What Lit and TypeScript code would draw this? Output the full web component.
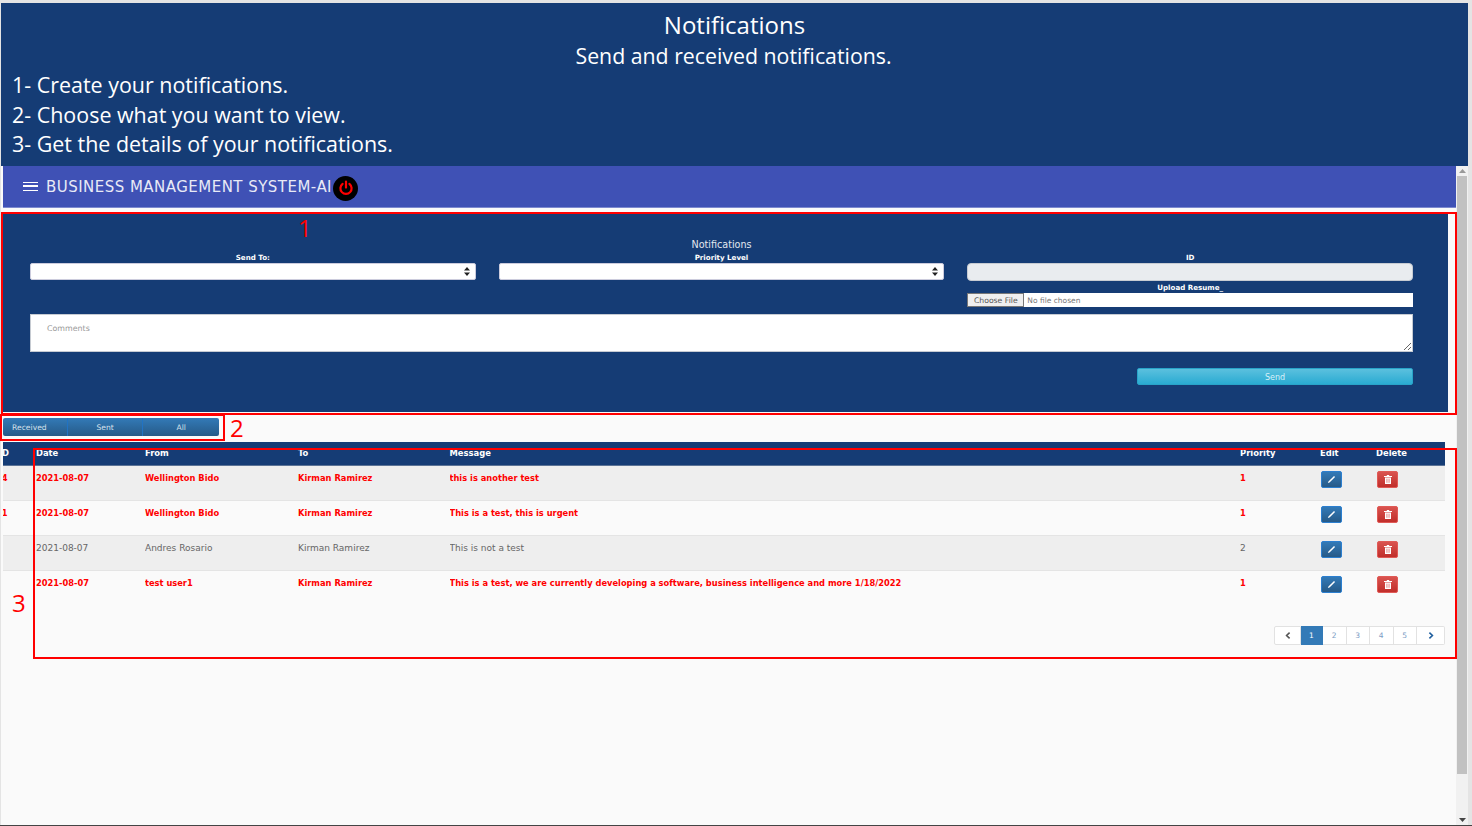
import { LitElement, css, html, svg } from "lit";
import { customElement } from "lit/decorators.js";
import { classMap } from "lit/directives/class-map.js";

const rows = [
  { id: "14", date: "2021-08-07", from: "Wellington Bido", to: "Kirman Ramirez", message: "this is another test", priority: 1, unread: true },
  { id: "11", date: "2021-08-07", from: "Wellington Bido", to: "Kirman Ramirez", message: "This is a test, this is urgent", priority: 1, unread: true },
  { id: "9", date: "2021-08-07", from: "Andres Rosario", to: "Kirman Ramirez", message: "This is not a test", priority: 2, unread: false },
  { id: "8", date: "2021-08-07", from: "test user1", to: "Kirman Ramirez", message: "This is a test, we are currently developing a software, business intelligence and more 1/18/2022", priority: 1, unread: true },
];

const selectArrows = svg`<svg class="arrows" width="6" height="9" viewBox="0 0 6 9"><path d="M3 0 6 3.6H0zM3 9 0 5.4h6z" fill="#222"/></svg>`;
const pencil = svg`<svg width="9" height="9" viewBox="0 0 10 10"><path d="M7.8 1 9 2.2 2.8 8.4 1 9 1.6 7.2z" fill="#fff"/></svg>`;
const trash = svg`<svg width="8" height="9" viewBox="0 0 8 9"><path d="M3 0h2l.4 1H8v1H0V1h2.6zM1 2.6h6V9H1z" fill="#fff"/><path d="M2.7 3.6v4.2M4 3.6v4.2M5.3 3.6v4.2" stroke="#d9534f" stroke-width=".5"/></svg>`;

@customElement("app-root")
export class AppRoot extends LitElement {
  static styles = css`
    :host {
      display: block;
      position: relative;
      width: 1472px;
      height: 826px;
      overflow: hidden;
      box-sizing: border-box;
      padding: 3px 4px 1px 1px;
      background: #e4e4e4;
      font-family: "DejaVu Sans", sans-serif;
    }
    .banner {
      height: 163px;
      box-sizing: border-box;
      padding-top: 6px;
      background: #153c75;
      color: #fff;
      font-family: "Open Sans", sans-serif;
    }
    .banner h1 {
      margin: 0;
      font-size: 24px;
      line-height: 32px;
      font-weight: 400;
      text-align: center;
    }
    .banner h2 {
      margin: 0 0 -1px -2px;
      font-size: 21.3px;
      line-height: 30px;
      font-weight: 400;
      text-align: center;
    }
    .banner ol {
      margin: 0;
      padding: 0 0 0 11px;
      list-style: none;
      font-size: 21.45px;
      line-height: 29.5px;
    }
    .workspace {
      display: flex;
      height: 659px;
    }
    .page {
      flex: 1;
      box-sizing: border-box;
      padding-left: 2px;
      background: #fafafa;
      min-width: 0;
    }
    .nav {
      display: flex;
      align-items: center;
      height: 42px;
      box-sizing: border-box;
      padding-left: 20px;
      background: #3f51b5;
      color: #e8eaf6;
      border-bottom: 1px solid #7d89cf;
      font-size: 15px;
      letter-spacing: 0.47px;
    }
    .nav-title {
      margin-top: 1px;
    }
    .hamburger {
      width: 15px;
      height: 9px;
      margin-right: 8px;
      border-top: 1.5px solid #fff;
      border-bottom: 1.5px solid #fff;
      box-sizing: border-box;
      position: relative;
    }
    .hamburger::after {
      content: "";
      position: absolute;
      left: 0;
      right: 0;
      top: 2.25px;
      height: 1.5px;
      background: #fff;
    }
    .power {
      display: flex;
      align-items: center;
      justify-content: center;
      width: 25px;
      height: 25px;
      margin: 3px 0 0 1px;
      border-radius: 50%;
      background: #000;
    }
    .form {
      margin: 6px 8px 0 0;
      height: 198px;
      box-sizing: border-box;
      padding: 24px 35px 0 27px;
      background: #153c75;
      color: #fff;
    }
    .form-title {
      text-align: center;
      font-size: 9.6px;
      line-height: 14px;
      color: #e3e8f0;
      margin-bottom: 1px;
    }
    .fields {
      display: grid;
      grid-template-columns: repeat(3, 1fr);
      column-gap: 23px;
    }
    .field label {
      display: block;
      text-align: center;
      font-size: 7.1px;
      font-weight: 700;
      line-height: 10px;
    }
    .select {
      position: relative;
    }
    .select select {
      display: block;
      width: 100%;
      height: 17px;
      appearance: none;
      background: #fff;
      border: 1px solid #ccd;
      border-radius: 2px;
    }
    .arrows {
      position: absolute;
      right: 6px;
      top: 4px;
    }
    .id-input {
      display: block;
      width: 100%;
      height: 18px;
      box-sizing: border-box;
      background: #e9ecef;
      border: 1px solid #c6cbd2;
      border-radius: 4px;
    }
    .field .upload-label {
      margin-top: 2px;
    }
    .file {
      display: flex;
      height: 14px;
      background: #fff;
      font-size: 7.5px;
      line-height: 15px;
      color: #777;
    }
    .file-button {
      box-sizing: border-box;
      width: 57px;
      border: 1px solid #777;
      background: #efefef;
      color: #555;
      text-align: center;
      line-height: 13px;
      font-size: 7.7px;
    }
    .file-name {
      padding-left: 3px;
    }
    textarea {
      display: block;
      width: 100%;
      height: 38px;
      margin-top: 7px;
      box-sizing: border-box;
      padding: 9px 16px;
      border: 1px solid #c6cbd2;
      font-family: inherit;
      font-size: 7.9px;
      background: #fff;
    }
    textarea::placeholder {
      color: #999;
    }
    .send-row {
      display: flex;
      justify-content: flex-end;
      margin-top: 16px;
    }
    .send {
      width: 276px;
      height: 17px;
      padding: 1px 0 0;
      border: 1px solid #28a4c9;
      border-radius: 2px;
      background: linear-gradient(#5bc0de, #2aabd2);
      color: #d8f1f8;
      font-family: inherit;
      font-size: 8px;
    }
    .filter {
      display: flex;
      width: 216px;
      height: 18px;
      margin: 6px 0 0 0;
      border-radius: 2px;
      overflow: hidden;
      background: linear-gradient(#337ab7, #265a88);
    }
    .filter button {
      padding: 0;
      border: 0;
      border-right: 1px solid #2173c4;
      background: none;
      color: #d5e1ec;
      font-family: inherit;
      font-size: 7.6px;
      width: 76px;
    }
    .filter button:first-child {
      width: 65px;
      padding-right: 11px;
    }
    .filter button:last-child {
      border-right: 0;
    }
    table {
      width: 1442px;
      margin-top: 6px;
      border-collapse: collapse;
      table-layout: fixed;
      font-size: 9px;
    }
    .c-id { width: 33px; }
    .c-date { width: 109px; }
    .c-from { width: 153px; }
    .c-to { width: 151.5px; }
    .c-msg { width: 790.5px; }
    .c-pri { width: 80px; }
    .c-edit { width: 56px; }
    .c-del { width: 69px; }
    th {
      height: 23px;
      padding: 0;
      box-sizing: border-box;
      background: #153c75;
      color: #fff;
      text-align: left;
      font-weight: 700;
      border-bottom: 1px solid #5b7396;
      font-size: 8.4px;
      vertical-align: middle;
    }
    td {
      height: 35px;
      box-sizing: border-box;
      padding: 7px 0 0;
      vertical-align: top;
      color: #666;
      border-bottom: 1px solid #e4e4e4;
      white-space: nowrap;
      overflow: hidden;
    }
    tbody tr:nth-child(odd) td {
      background: #eee;
    }
    tbody tr:last-child td {
      border-bottom: 0;
    }
    tr.unread td {
      color: #f00;
      font-weight: 700;
      font-size: 8.3px;
    }
    .clip {
      overflow: hidden;
    }
    th.clip span {
      display: inline-block;
      margin-left: -4px;
    }
    td.clip span {
      display: inline-block;
      margin-left: -7px;
    }
    td.actions {
      padding-top: 5px;
    }
    .icon-btn {
      display: flex;
      align-items: center;
      justify-content: center;
      width: 21px;
      height: 17px;
      margin-left: 1px;
      padding: 0;
      border-radius: 2px;
    }
    .edit {
      border: 1px solid #2b7fd0;
      background: linear-gradient(#337ab7, #265a88);
    }
    .delete {
      border: 1px solid #e05a56;
      background: linear-gradient(#d9534f, #c12e2a);
    }
    .pager {
      display: flex;
      justify-content: flex-end;
      margin: 21px 11px 0 0;
    }
    .pager a {
      display: flex;
      align-items: center;
      justify-content: center;
      box-sizing: border-box;
      width: 23.5px;
      height: 19px;
      background: #fff;
      border: 1px solid #e2e2e2;
      border-left: 0;
      color: #7b9cc4;
      font-size: 7.5px;
    }
    .pager a:first-child {
      width: 27px;
      border-left: 1px solid #e2e2e2;
      border-radius: 2px 0 0 2px;
    }
    .pager a:last-child {
      width: 28px;
      border-radius: 0 2px 2px 0;
    }
    .pager a.active {
      width: 22px;
      background: #337ab7;
      border-color: #337ab7;
      color: #fff;
    }
    .scrollbar {
      display: flex;
      flex-direction: column;
      align-items: center;
      width: 12px;
      background: #f1f1f1;
    }
    .scroll-up,
    .scroll-down {
      height: 10px;
      width: 100%;
      display: flex;
      align-items: center;
      justify-content: center;
    }
    .thumb {
      width: 10px;
      height: 598px;
      background: #c1c1c1;
    }
    .spacer {
      flex: 1;
    }
    .mark {
      position: absolute;
      box-sizing: border-box;
      border: 2px solid #f00;
      pointer-events: none;
    }
    .m1 { left: 1px; top: 212px; width: 1456px; height: 203px; }
    .m2 { left: 0; top: 414px; width: 225px; height: 27px; }
    .m3 { left: 33px; top: 448px; width: 1424px; height: 211px; }
    .num {
      position: absolute;
      color: #f00;
      font-family: "Open Sans", sans-serif;
      font-size: 24px;
      line-height: 28px;
    }
    .n1 { left: 298px; top: 214px; }
    .n2 { left: 230px; top: 414px; }
    .n3 { left: 12px; top: 589px; }
    .bottom-line {
      position: absolute;
      left: 0;
      right: 0;
      bottom: 0;
      height: 1px;
      background: #444;
    }
  `;

  render() {
    return html`
      <header class="banner">
        <h1>Notifications</h1>
        <h2>Send and received notifications.</h2>
        <ol>
          <li>1- Create your notifications.</li>
          <li>2- Choose what you want to view.</li>
          <li>3- Get the details of your notifications.</li>
        </ol>
      </header>
      <div class="workspace">
        <main class="page">
          <nav class="nav">
            <span class="hamburger"></span>
            <span class="nav-title">BUSINESS MANAGEMENT SYSTEM-AI</span>
            <span class="power">
              <svg width="16" height="16" viewBox="0 0 16 16" fill="none" stroke="#f00" stroke-width="2.2" stroke-linecap="round">
                <path d="M8 1.6v6M4.6 3.9a5.6 5.6 0 1 0 6.8 0" />
              </svg>
            </span>
          </nav>
          <section class="form">
            <div class="form-title">Notifications</div>
            <div class="fields">
              <div class="field">
                <label>Send To:</label>
                <div class="select"><select></select>${selectArrows}</div>
              </div>
              <div class="field">
                <label>Priority Level</label>
                <div class="select"><select></select>${selectArrows}</div>
              </div>
              <div class="field">
                <label>ID</label>
                <input class="id-input" disabled />
                <label class="upload-label">Upload Resume_</label>
                <div class="file">
                  <span class="file-button">Choose File</span>
                  <span class="file-name">No file chosen</span>
                </div>
              </div>
            </div>
            <textarea placeholder="Comments"></textarea>
            <div class="send-row"><button class="send">Send</button></div>
          </section>
          <div class="filter">
            <button>Received</button>
            <button>Sent</button>
            <button>All</button>
          </div>
          <table>
            <colgroup>
              <col class="c-id" /><col class="c-date" /><col class="c-from" /><col class="c-to" />
              <col class="c-msg" /><col class="c-pri" /><col class="c-edit" /><col class="c-del" />
            </colgroup>
            <thead>
              <tr>
                <th class="clip"><span>ID</span></th>
                <th>Date</th><th>From</th><th>To</th><th>Message</th><th>Priority</th><th>Edit</th><th>Delete</th>
              </tr>
            </thead>
            <tbody>
              ${rows.map(
                (r) => html`
                  <tr class=${classMap({ unread: r.unread })}>
                    <td class="clip"><span>${r.id}</span></td>
                    <td>${r.date}</td>
                    <td>${r.from}</td>
                    <td>${r.to}</td>
                    <td>${r.message}</td>
                    <td>${r.priority}</td>
                    <td class="actions"><button class="icon-btn edit">${pencil}</button></td>
                    <td class="actions"><button class="icon-btn delete">${trash}</button></td>
                  </tr>
                `
              )}
            </tbody>
          </table>
          <div class="pager">
            <a><svg width="6" height="7" viewBox="0 0 6 7"><path d="M4.6.6 1.6 3.5l3 2.9" fill="none" stroke="#555" stroke-width="1.6"/></svg></a>
            <a class="active">1</a><a>2</a><a>3</a><a>4</a><a>5</a>
            <a><svg width="6" height="7" viewBox="0 0 6 7"><path d="M1.4.6l3 2.9-3 2.9" fill="none" stroke="#1f5f9e" stroke-width="1.6"/></svg></a>
          </div>
        </main>
        <aside class="scrollbar">
          <div class="scroll-up"><svg width="7" height="4" viewBox="0 0 7 4"><path d="M3.5 0 7 4H0z" fill="#999"/></svg></div>
          <div class="thumb"></div>
          <div class="spacer"></div>
          <div class="scroll-down"><svg width="7" height="4" viewBox="0 0 7 4"><path d="M0 0h7L3.5 4z" fill="#444"/></svg></div>
        </aside>
      </div>
      <div class="mark m1"></div>
      <div class="mark m2"></div>
      <div class="mark m3"></div>
      <span class="num n1">1</span>
      <span class="num n2">2</span>
      <span class="num n3">3</span>
      <div class="bottom-line"></div>
    `;
  }
}
